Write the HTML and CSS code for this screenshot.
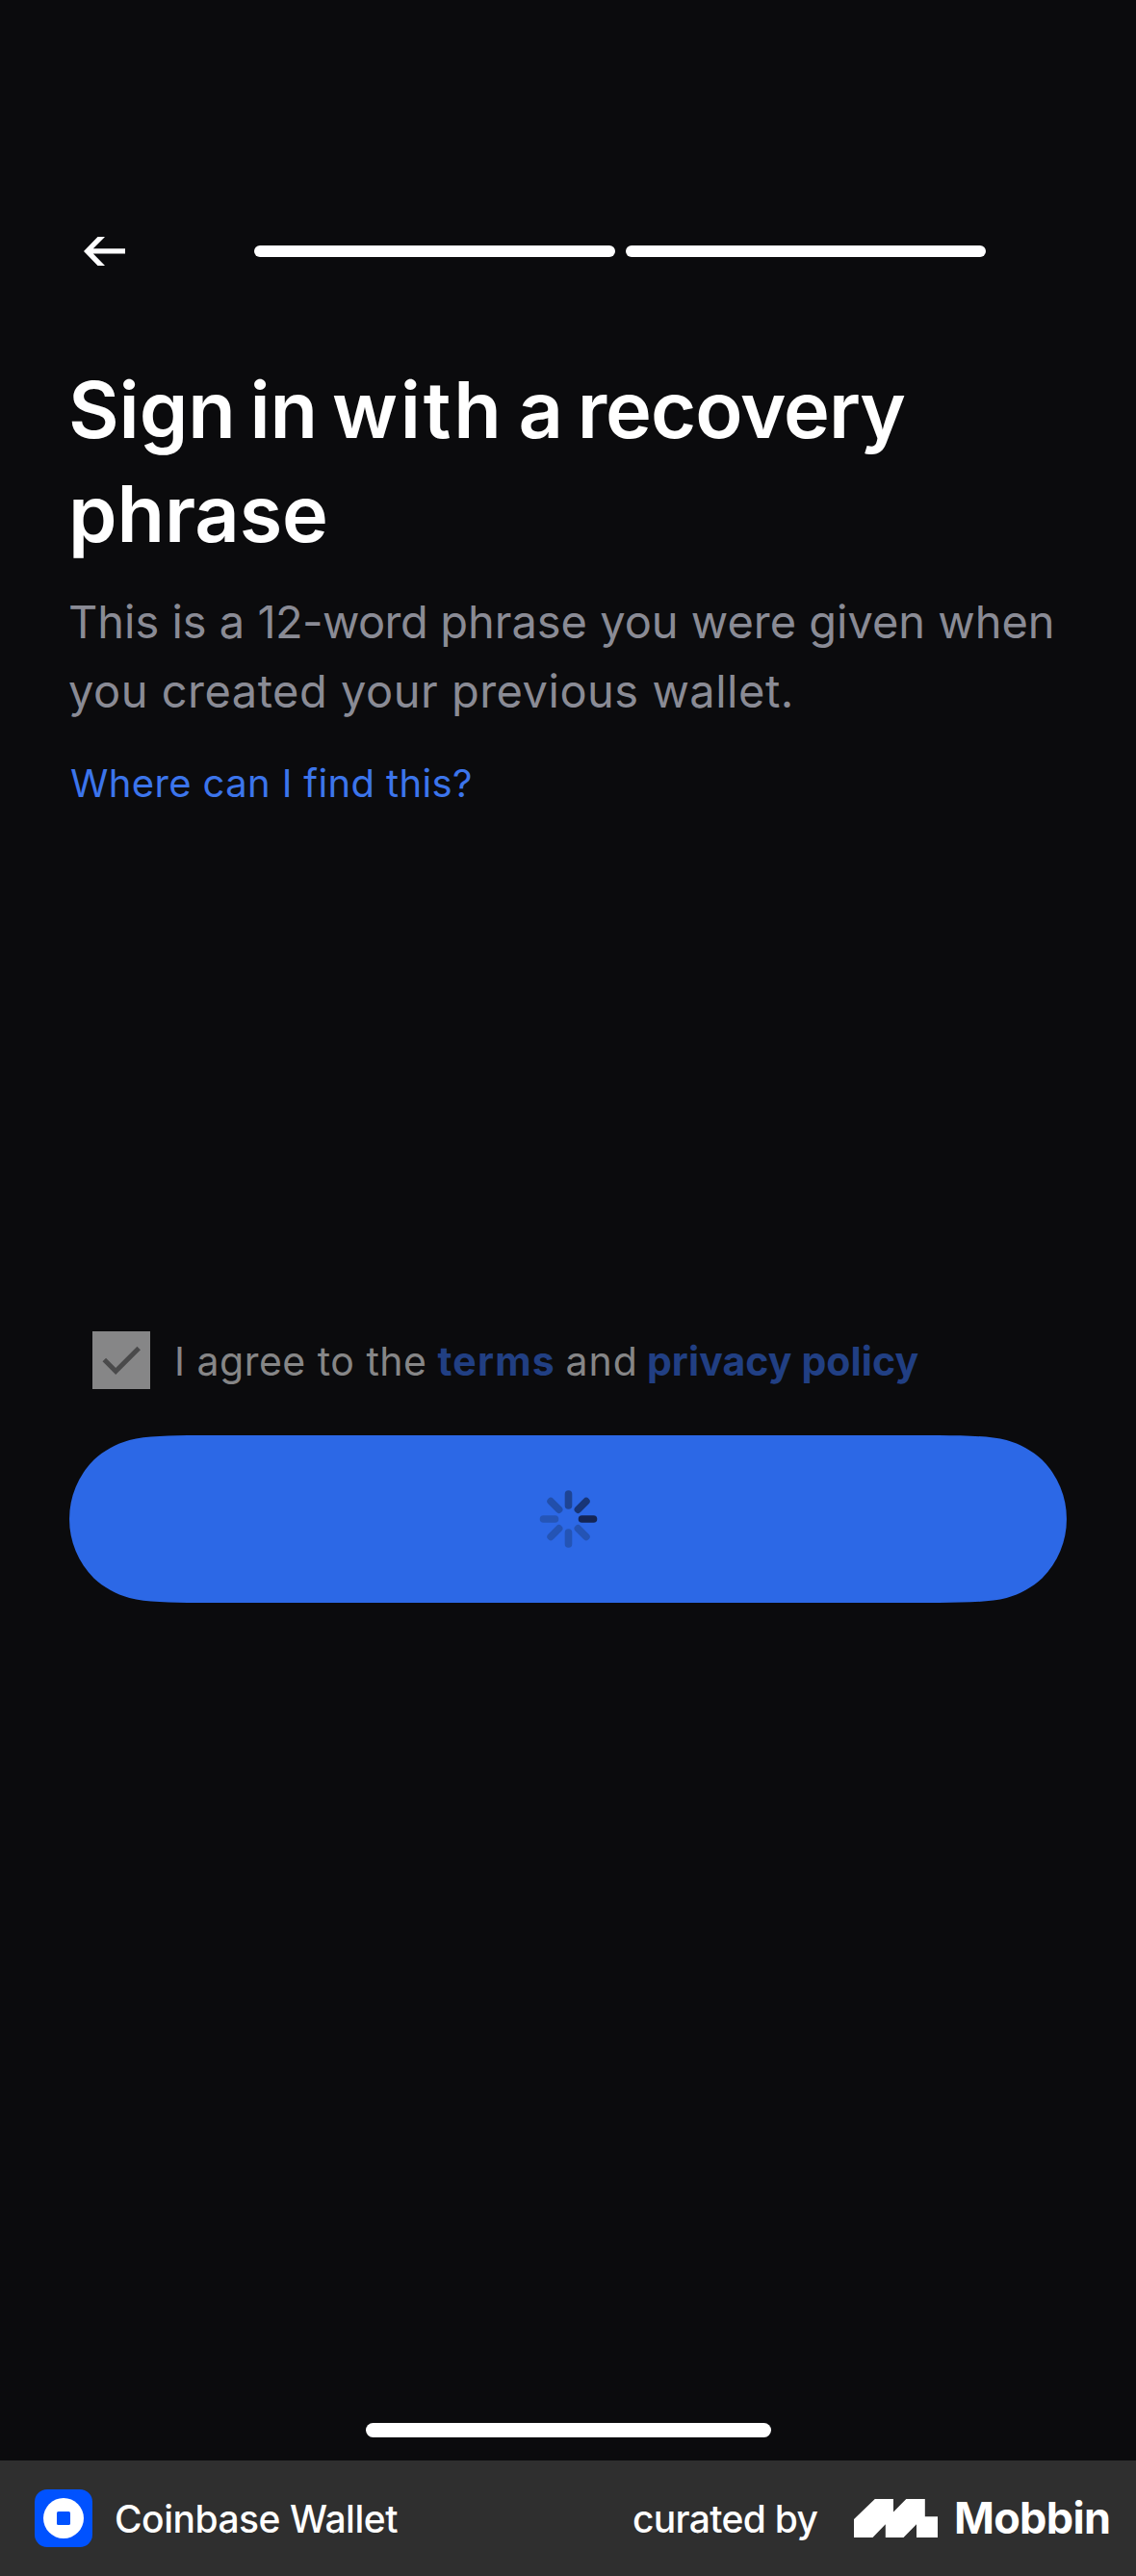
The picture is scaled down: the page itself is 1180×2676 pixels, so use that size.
FILE: index.html
```
<!DOCTYPE html>
<html lang="en">
<head>
<meta charset="utf-8">
<title>Coinbase Wallet – Sign in</title>
<link rel="stylesheet" href="styles.css">
</head>
<body>
<main class="screen">
  <header class="nav">
    <svg class="back" width="44" height="30" viewBox="0 0 44 30" aria-label="Back">
      <path d="M14.5 0H22L9.8 12.2H43v5.4H9.8L22 30h-7.5L0 15z" fill="#fff"/>
    </svg>
    <div class="progress"><span class="step"></span><span class="step"></span></div>
  </header>

  <h1 class="title"><span class="line title-first">Sign in <span class="wide">with</span> a <span class="tight">recovery</span></span><span class="line">phrase</span></h1>
  <p class="lead"><span class="line lead-first">This is a <span class="count">12-word</span> phrase you were given when</span><span class="line lead-second">you created your previous wallet.</span></p>
  <a class="help">Where can I find this?</a>

  <div class="consent">
    <svg class="checkbox" width="60" height="60" viewBox="0 0 60 60">
      <rect width="60" height="60" fill="#868687"/>
      <path d="M12.3 29.5L24.2 41.4L48.2 17.4" fill="none" stroke="#4a4a4b" stroke-width="5"/>
    </svg>
    <p class="consent-text">I agree to the <a class="terms">terms</a> <span class="and">and</span> <a class="policy">privacy policy</a></p>
  </div>

  <button class="submit" aria-label="Signing in">
    <svg width="1036" height="174" viewBox="0 0 1036 174">
      <path fill="#2c68e6" d="M133 0H903C931 .3 956 .5 973.5 5C988 9 1000 16 1010.5 25.5A87 87 0 0 1 1010.5 148.5C1000 158 988 165 973.5 169C956 173.5 931 173.7 903 174H133C105 173.7 80 173.5 62.5 169C48 165 36 158 25.5 148.5A87 87 0 0 1 25.5 25.5C36 16 48 9 62.5 5C80 .5 105 .3 133 0Z"/>
      <g transform="translate(518.5 87)" stroke-width="7.6" stroke-linecap="round">
        <path d="M14 0H26" stroke="#142554"/>
        <path d="M14 0H26" stroke="#183576" transform="rotate(-45)"/>
        <path d="M14 0H26" stroke="#1e4494" transform="rotate(-90)"/>
        <path d="M14 0H26" stroke="#224fab" transform="rotate(-135)"/>
        <path d="M14 0H26" stroke="#2555b7" transform="rotate(180)"/>
        <path d="M14 0H26" stroke="#2454b5" transform="rotate(135)"/>
        <path d="M14 0H26" stroke="#2454b5" transform="rotate(90)"/>
        <path d="M14 0H26" stroke="#2454b5" transform="rotate(45)"/>
      </g>
    </svg>
  </button>

  <div class="home-indicator"></div>
</main>

<footer class="credit">
  <svg class="app-icon" width="60" height="60" viewBox="0 0 60 60">
    <rect width="60" height="60" rx="13" fill="#0052ff"/>
    <circle cx="30" cy="30" r="21" fill="#fff"/>
    <rect x="23" y="23" width="14" height="14" rx="1.6" fill="#0052ff"/>
  </svg>
  <span class="app-name">Coinbase Wallet</span>
  <span class="curated">curated by</span>
  <svg class="mobbin-mark" width="87" height="40" viewBox="0 0 87 40">
    <path fill="#fff" d="M0 21L21.8 0H41V13.5L54.3 0H73.8V18.3H87V40H65V26.3L51.5 40H32.8V26.3L19.5 40H0z"/>
  </svg>
  <span class="mobbin">Mobbin</span>
</footer>
</body>
</html>
```
FILE: styles.css
```
* { box-sizing: border-box; }

body {
  margin: 0;
  width: 1180px;
  height: 2676px;
  display: flex;
  flex-direction: column;
  background: #0b0b0d;
  color: #fff;
  font-family: Inter, "Liberation Sans", sans-serif;
}

svg { display: block; flex: none; }

.screen {
  flex: 1;
  display: flex;
  flex-direction: column;
  padding: 246px 72px 24px;
}

.nav {
  display: flex;
  align-items: center;
  height: 30px;
  padding-left: 15px;
}

.progress {
  display: flex;
  gap: 11px;
  width: 760px;
  margin-left: 133px;
}

.step {
  flex: 1;
  height: 12px;
  border-radius: 6px;
  background: #fff;
}

.line {
  display: block;
  white-space: nowrap;
}

.title {
  margin: 96px 0 0 -1px;
  font-size: 81px;
  line-height: 108px;
  font-weight: 600;
  letter-spacing: -0.1px;
}

.title-first { word-spacing: -5.5px; }
.wide { letter-spacing: 2.8px; }
.tight { letter-spacing: -1px; }

.lead {
  margin: 22px 0 0 -1px;
  font-size: 47px;
  line-height: 72px;
  color: #8a8b95;
}

.lead-first { letter-spacing: -0.02px; }
.count { letter-spacing: -0.6px; }
.lead-second { letter-spacing: 0.5px; }

.help {
  margin: 30px 0 0 1px;
  font-size: 40px;
  line-height: 60px;
  letter-spacing: 0.37px;
  color: #3c75ec;
}

.consent {
  display: flex;
  gap: 25px;
  height: 60px;
  margin: 539px 0 48px;
  padding-left: 24px;
}

.consent-text {
  margin: 0;
  font-size: 41px;
  line-height: 62px;
  letter-spacing: 0.5px;
  white-space: nowrap;
  color: #868687;
}

.terms,
.policy {
  font-weight: 700;
  color: #213f83;
}

.terms { letter-spacing: 1.2px; margin-left: -1px; }
.and { letter-spacing: 1px; margin-left: -1.5px; }
.policy { letter-spacing: 0.1px; margin-left: -3px; }

.submit {
  height: 174px;
  padding: 0;
  border: 0;
  background: none;
}

.home-indicator {
  width: 421px;
  height: 15px;
  margin: auto 0 0 308px;
  border-radius: 8px;
  background: #fff;
}

.credit {
  display: flex;
  align-items: center;
  height: 120px;
  padding-left: 36px;
  background: #2f2f2f;
  font-size: 39px;
  line-height: 62px;
  font-weight: 500;
  white-space: nowrap;
}

.app-name {
  width: 538px;
  margin-left: 23px;
  padding-top: 2px;
  letter-spacing: -0.5px;
}

.curated {
  width: 230px;
  padding-top: 2px;
  letter-spacing: -0.7px;
}

.mobbin {
  margin-left: 17px;
  font-size: 45px;
  font-weight: 700;
  letter-spacing: -0.7px;
}
```
